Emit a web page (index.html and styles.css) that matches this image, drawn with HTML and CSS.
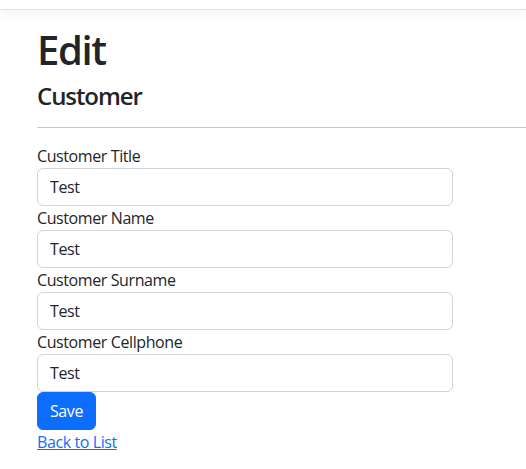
FILE: index.html
```html
<!DOCTYPE html>
<html lang="en">
<head>
<meta charset="utf-8">
<title>Edit - Customer</title>
<link rel="stylesheet" href="styles.css">
</head>
<body>
<header class="navbar"></header>
<main class="main">
  <h1 class="title">Edit</h1>
  <h4 class="subtitle">Customer</h4>
  <hr class="divider">
  <form class="form">
    <div class="form-group">
      <label class="control-label" for="title">Customer Title</label>
      <input class="form-control" id="title" type="text" value="Test">
    </div>
    <div class="form-group">
      <label class="control-label" for="name">Customer Name</label>
      <input class="form-control" id="name" type="text" value="Test">
    </div>
    <div class="form-group">
      <label class="control-label" for="surname">Customer Surname</label>
      <input class="form-control" id="surname" type="text" value="Test">
    </div>
    <div class="form-group">
      <label class="control-label" for="cell">Customer Cellphone</label>
      <input class="form-control" id="cell" type="text" value="Test">
    </div>
    <div class="form-group">
      <button type="button" class="btn btn-primary">Save</button>
    </div>
  </form>
  <div class="back">
    <a href="#" class="link">Back to List</a>
  </div>
</main>
</body>
</html>
```

FILE: styles.css
```css
* { box-sizing: border-box; }
html, body {
  margin: 0;
  padding: 0;
  background: #fff;
  overflow: hidden;
}
body {
  font-family: "Segoe UI", "Open Sans", sans-serif;
  font-size: 16px;
  line-height: 1.5;
  letter-spacing: -0.025em;
  color: #212529;
}
.navbar {
  height: 10px;
  border-bottom: 1px solid #dee2e6;
  box-shadow: 0 4px 12px rgba(0, 0, 0, 0.05);
  background: #fff;
  margin-bottom: 16px;
}
.main {
  padding-left: 37px;
}
.title {
  margin: 0 0 8px;
  font-size: 40px;
  font-weight: 600;
  line-height: 1.2;
  letter-spacing: -0.035em;
}
.subtitle {
  margin: 0 0 8px;
  font-size: 24px;
  font-weight: 600;
  line-height: 1.2;
  letter-spacing: -0.045em;
}
.divider {
  margin: 16px 0;
  border: 0;
  border-top: 1px solid #212529;
  opacity: 0.25;
}
.form {
  width: 416px;
  margin: 0;
}
.control-label {
  display: block;
}
.form-control {
  display: block;
  width: 100%;
  height: 38px;
  padding: 6px 12px;
  font-family: inherit;
  font-size: 16px;
  line-height: 1.5;
  letter-spacing: inherit;
  color: #212529;
  background: #fff;
  border: 1px solid #ced4da;
  border-radius: 6px;
}
.btn {
  display: inline-block;
  font-family: inherit;
  font-size: 16px;
  line-height: 1.5;
  letter-spacing: inherit;
  padding: 6px 12px;
  border: 1px solid transparent;
  border-radius: 6px;
  cursor: pointer;
}
.btn-primary {
  color: #fff;
  background: #0d6efd;
  border-color: #0d6efd;
}
.link {
  color: #0d6efd;
  text-decoration: underline;
}
```
